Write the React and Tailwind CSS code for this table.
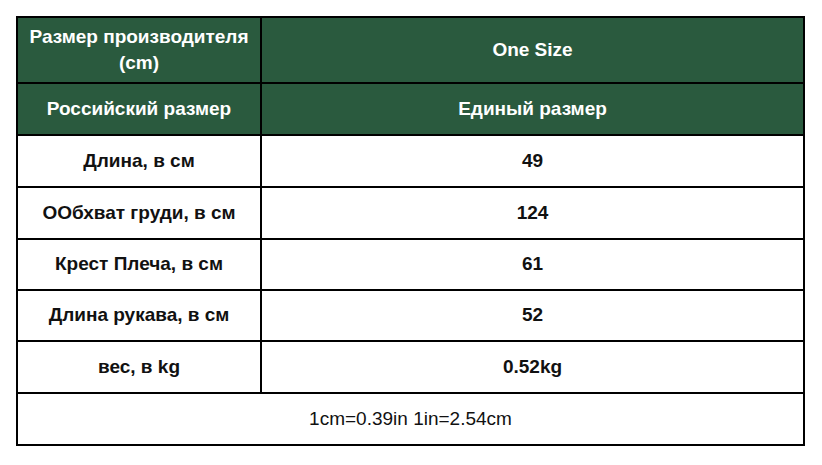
const rows = [
  ['Длина, в см', '49', 'h-[52px]'],
  ['ООбхват груди, в см', '124', 'h-[52px]'],
  ['Крест Плеча, в см', '61', 'h-[51px]'],
  ['Длина рукава, в см', '52', 'h-[51px]'],
  ['вес, в kg', '0.52kg', 'h-[52px]'],
]

export default function App() {
  return (
    <div className="w-[822px] h-[465px] bg-white pt-[16px] pl-[16px] font-['Liberation_Sans',Arial,sans-serif]">
      <div className="w-[789px] border-2 border-black">
        {/* header */}
        <div className="grid grid-cols-[244px_1fr] h-[66px] bg-[#2a5a3e] text-white font-bold text-[19px] border-b-2 border-black">
          <div className="flex items-center justify-center text-center leading-[26px] border-r-2 border-black">
            Размер производителя<br />(cm)
          </div>
          <div className="flex items-center justify-center">One Size</div>
        </div>
        <div className="grid grid-cols-[244px_1fr] h-[52px] bg-[#2a5a3e] text-white font-bold text-[19px] border-b-2 border-black">
          <div className="flex items-center justify-center border-r-2 border-black">Российский размер</div>
          <div className="flex items-center justify-center">Единый размер</div>
        </div>

        {rows.map(([label, value, h]) => (
          <div key={label} className={`grid grid-cols-[244px_1fr] ${h} text-[#111] font-bold text-[19px] border-b-2 border-black`}>
            <div className="flex items-center justify-center border-r-2 border-black">{label}</div>
            <div className="flex items-center justify-center">{value}</div>
          </div>
        ))}

        <div className="h-[50px] flex items-center justify-center text-[19px] text-[#111]">
          1cm=0.39in 1in=2.54cm
        </div>
      </div>
    </div>
  )
}
